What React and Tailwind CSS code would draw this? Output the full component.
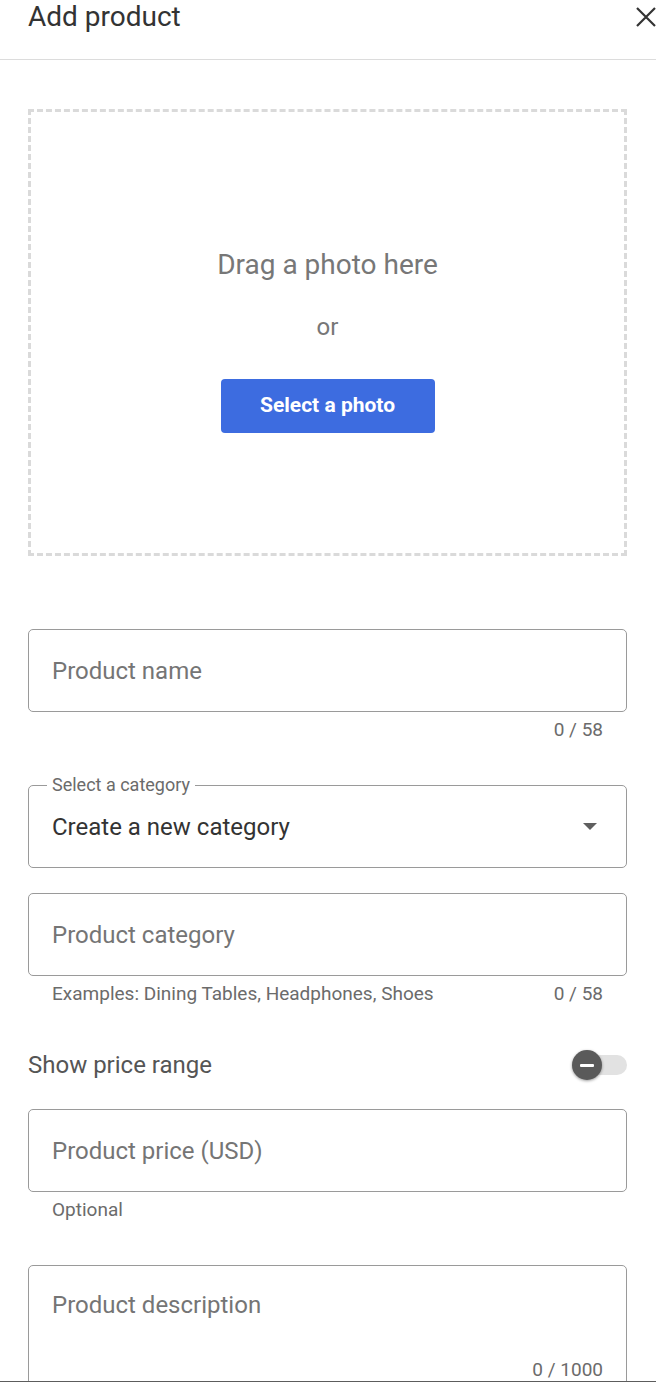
import React from "react";

const Field = ({ label, className = "h-[83px]" }) => (
  <div className={`${className} border border-[#9a9a9a] rounded-[5px] flex items-center px-[23px]`}>
    <span className="text-[24px] text-[#757575]">{label}</span>
  </div>
);

const Helper = ({ left, right }) => (
  <div className="h-[73px] pt-[7px] px-[24px] flex justify-between text-[19px] leading-[22px] text-[#6b6b6b]">
    <span>{left}</span>
    <span>{right}</span>
  </div>
);

export default function App() {
  return (
    <div className="w-[656px] h-[1392px] bg-white overflow-hidden" style={{ fontFamily: "Roboto, 'Noto Sans', sans-serif" }}>
      <div className="h-[1382px] overflow-hidden border-b border-[#5c5c5c]">
        {/* HEADER */}
        <div className="h-[60px] border-b border-[#dcdcdc] flex items-start justify-between pl-[28px]">
          <h1 className="text-[28px] leading-[34px] text-[#333]">Add product</h1>
          <svg width="24" height="24" viewBox="0 0 24 24" className="mt-[5px] mr-[-2px]">
            <path d="M3 3 L21 21 M21 3 L3 21" stroke="#333" strokeWidth="2.2" />
          </svg>
        </div>

        <div className="ml-[28px] w-[599px]">
          {/* PHOTO DROP */}
          <div className="mt-[49px] h-[447px] border-[3px] border-dashed border-[#dadada] flex flex-col items-center pt-[136px]">
            <p className="text-[28px] leading-[34px] text-[#777]">Drag a photo here</p>
            <p className="mt-[30px] text-[24px] leading-[30px] text-[#777]">or</p>
            <button className="mt-[37px] w-[214px] h-[54px] rounded-[4px] bg-[#3d6ce0] text-white text-[21px] font-bold">
              Select a photo
            </button>
          </div>

          {/* PRODUCT NAME */}
          <div className="mt-[73px]">
            <Field label="Product name" />
            <Helper left="" right="0 / 58" />
          </div>

          {/* CATEGORY SELECT */}
          <div className="relative h-[83px] border border-[#9a9a9a] rounded-[5px] flex items-center justify-between pl-[23px] pr-[28px]">
            <span className="absolute -top-[12px] left-[18px] bg-white px-[5px] text-[18px] leading-[22px] text-[#6b6b6b]">Select a category</span>
            <span className="text-[24px] text-[#333]">Create a new category</span>
            <svg width="16" height="8" viewBox="0 0 16 8">
              <path d="M1 0 L15 0 L8 7 Z" fill="#5f5f5f" />
            </svg>
          </div>

          <div className="mt-[25px]">
            <Field label="Product category" />
            <div className="h-[74px] pt-[7px] px-[24px] flex justify-between text-[19px] leading-[22px] text-[#6b6b6b]">
              <span>Examples: Dining Tables, Headphones, Shoes</span>
              <span>0 / 58</span>
            </div>
          </div>

          {/* PRICE RANGE TOGGLE */}
          <div className="h-[30px] flex items-center justify-between">
            <span className="text-[24px] text-[#555]">Show price range</span>
            <div className="relative w-[55px] h-[30px] flex items-center">
              <div className="absolute right-0 w-[42px] h-[20px] rounded-full bg-[#e2e2e2]" />
              <div className="relative w-[30px] h-[30px] rounded-full bg-[#5a5a5a] shadow-[0_1px_3px_rgba(0,0,0,0.4)] flex items-center justify-center">
                <div className="w-[14px] h-[3px] bg-white rounded-[1px]" />
              </div>
            </div>
          </div>

          <div className="mt-[29px]">
            <Field label="Product price (USD)" />
            <Helper left="Optional" right="" />
          </div>

          {/* DESCRIPTION */}
          <div className="relative h-[160px] border border-[#9a9a9a] rounded-[5px] px-[23px] pt-[24px]">
            <span className="text-[24px] leading-[30px] text-[#757575]">Product description</span>
            <span className="absolute top-[93px] right-[23px] text-[19px] leading-[22px] text-[#6b6b6b]">0 / 1000</span>
          </div>
        </div>
      </div>
    </div>
  );
}
